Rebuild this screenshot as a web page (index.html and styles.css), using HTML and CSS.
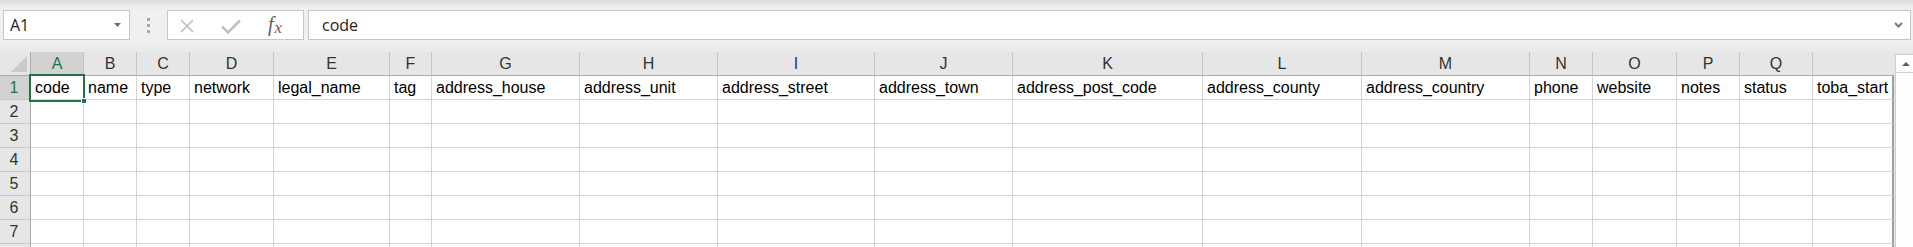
FILE: index.html
```html
<!DOCTYPE html>
<html lang="en">
<head>
<meta charset="utf-8">
<title>Sheet</title>
<link rel="stylesheet" href="styles.css">
</head>
<body>
<div class="app">
  <div class="fbar">
    <div class="namebox">
      <span class="nb-text">A1</span>
      <svg class="nb-arrow" width="7" height="4" viewBox="0 0 7 4"><path d="M0 0 H7 L3.5 4 Z" fill="#6d6d6d"/></svg>
    </div>
    <div class="grip"><i></i><i></i><i></i></div>
    <div class="fbuttons">
      <svg class="ic-x" width="14" height="14" viewBox="0 0 14 14"><path d="M1 1 L13 13 M13 1 L1 13" stroke="#bdbdbd" stroke-width="1.6" fill="none"/></svg>
      <svg class="ic-check" width="20" height="15" viewBox="0 0 20 15"><path d="M1 7.5 L7 13.5 L19 1.5" stroke="#c2c2c2" stroke-width="2.6" fill="none"/></svg>
      <span class="fx">f<span class="fx-x">x</span></span>
    </div>
    <div class="finput">
      <span class="fi-text">code</span>
      <svg class="fi-chev" width="9" height="6" viewBox="0 0 9 6"><path d="M1 1 L4.5 4.5 L8 1" stroke="#7a7a7a" stroke-width="2" fill="none"/></svg>
    </div>
  </div>
  <div class="sheet">
    <div class="grid">
      <div class="hd corner"><svg width="16" height="16" viewBox="0 0 16 16"><path d="M16 0 V16 H0 Z" fill="#cacaca"/></svg></div>
      <div class="hd col sel">A</div>
      <div class="hd col">B</div>
      <div class="hd col">C</div>
      <div class="hd col">D</div>
      <div class="hd col">E</div>
      <div class="hd col">F</div>
      <div class="hd col">G</div>
      <div class="hd col">H</div>
      <div class="hd col">I</div>
      <div class="hd col">J</div>
      <div class="hd col">K</div>
      <div class="hd col">L</div>
      <div class="hd col">M</div>
      <div class="hd col">N</div>
      <div class="hd col">O</div>
      <div class="hd col">P</div>
      <div class="hd col">Q</div>
      <div class="hd col last"></div>

      <div class="rh sel">1</div>
      <div class="c">code</div><div class="c">name</div><div class="c">type</div><div class="c">network</div><div class="c">legal_name</div><div class="c">tag</div><div class="c">address_house</div><div class="c">address_unit</div><div class="c">address_street</div><div class="c">address_town</div><div class="c">address_post_code</div><div class="c">address_county</div><div class="c">address_country</div><div class="c">phone</div><div class="c">website</div><div class="c">notes</div><div class="c">status</div><div class="c last">toba_start</div>

      <div class="rh">2</div>
      <div class="c"></div><div class="c"></div><div class="c"></div><div class="c"></div><div class="c"></div><div class="c"></div><div class="c"></div><div class="c"></div><div class="c"></div><div class="c"></div><div class="c"></div><div class="c"></div><div class="c"></div><div class="c"></div><div class="c"></div><div class="c"></div><div class="c"></div><div class="c last"></div>

      <div class="rh">3</div>
      <div class="c"></div><div class="c"></div><div class="c"></div><div class="c"></div><div class="c"></div><div class="c"></div><div class="c"></div><div class="c"></div><div class="c"></div><div class="c"></div><div class="c"></div><div class="c"></div><div class="c"></div><div class="c"></div><div class="c"></div><div class="c"></div><div class="c"></div><div class="c last"></div>

      <div class="rh">4</div>
      <div class="c"></div><div class="c"></div><div class="c"></div><div class="c"></div><div class="c"></div><div class="c"></div><div class="c"></div><div class="c"></div><div class="c"></div><div class="c"></div><div class="c"></div><div class="c"></div><div class="c"></div><div class="c"></div><div class="c"></div><div class="c"></div><div class="c"></div><div class="c last"></div>

      <div class="rh">5</div>
      <div class="c"></div><div class="c"></div><div class="c"></div><div class="c"></div><div class="c"></div><div class="c"></div><div class="c"></div><div class="c"></div><div class="c"></div><div class="c"></div><div class="c"></div><div class="c"></div><div class="c"></div><div class="c"></div><div class="c"></div><div class="c"></div><div class="c"></div><div class="c last"></div>

      <div class="rh">6</div>
      <div class="c"></div><div class="c"></div><div class="c"></div><div class="c"></div><div class="c"></div><div class="c"></div><div class="c"></div><div class="c"></div><div class="c"></div><div class="c"></div><div class="c"></div><div class="c"></div><div class="c"></div><div class="c"></div><div class="c"></div><div class="c"></div><div class="c"></div><div class="c last"></div>

      <div class="rh">7</div>
      <div class="c"></div><div class="c"></div><div class="c"></div><div class="c"></div><div class="c"></div><div class="c"></div><div class="c"></div><div class="c"></div><div class="c"></div><div class="c"></div><div class="c"></div><div class="c"></div><div class="c"></div><div class="c"></div><div class="c"></div><div class="c"></div><div class="c"></div><div class="c last"></div>

      <div class="rh"></div>
      <div class="c"></div><div class="c"></div><div class="c"></div><div class="c"></div><div class="c"></div><div class="c"></div><div class="c"></div><div class="c"></div><div class="c"></div><div class="c"></div><div class="c"></div><div class="c"></div><div class="c"></div><div class="c"></div><div class="c"></div><div class="c"></div><div class="c"></div><div class="c last"></div>

      <div class="selection"><i class="handle"></i></div>
    </div>
    <div class="vscroll">
      <div class="up"><svg width="8" height="4" viewBox="0 0 8 4"><path d="M0 4 H8 L4 0 Z" fill="#5e5e5e"/></svg></div>
    </div>
  </div>
</div>
</body>
</html>
```

FILE: styles.css
```css
* { box-sizing: border-box; }

html, body {
  margin: 0;
  padding: 0;
  background: #e6e6e6;
}

.app {
  width: 1913px;
  height: 247px;
  overflow: hidden;
  display: flex;
  flex-direction: column;
}

/* ---------- formula bar ---------- */
.fbar {
  height: 52px;
  flex: none;
  display: flex;
  align-items: flex-start;
  padding-top: 10px;
  background: linear-gradient(#dcdcdc 0, #ececec 6px, #f0f0f0 12px, #f0f0f0 39px, #e9e9e9 52px);
}

.namebox {
  margin-left: 3px;
  width: 127px;
  height: 30px;
  background: #fff;
  border: 1px solid #c6c6c6;
  display: flex;
  align-items: center;
  justify-content: space-between;
  padding: 0 8px 0 6px;
}

.nb-text, .fi-text {
  font-family: "Open Sans", "Liberation Sans", sans-serif;
  font-size: 16px;
  color: #222;
}

.grip {
  margin-left: 17px;
  margin-top: 8px;
  width: 3px;
  display: flex;
  flex-direction: column;
  gap: 3px;
}
.grip i {
  display: block;
  width: 3px;
  height: 3px;
  background: #a9a9a9;
}

.fbuttons {
  margin-left: 17px;
  width: 137px;
  height: 30px;
  background: #fff;
  border: 1px solid #c6c6c6;
  display: flex;
  align-items: center;
  padding-left: 12px;
}
.ic-x { margin-top: 1px; }
.ic-check { margin-left: 27px; margin-top: 2px; }
.fx {
  margin-left: 27px;
  font-family: "Liberation Serif", serif;
  font-style: italic;
  font-size: 20px;
  color: #5f5f5f;
  line-height: 1;
  margin-top: -2px;
}
.fx-x {
  font-size: 17px;
  position: relative;
  top: 2px;
  margin-left: 1px;
}

.finput {
  margin-left: 4px;
  flex: 1;
  margin-right: 2px;
  height: 30px;
  background: #fff;
  border: 1px solid #c6c6c6;
  display: flex;
  align-items: center;
  justify-content: space-between;
  padding: 0 7px 0 13px;
}

/* ---------- sheet ---------- */
.sheet {
  flex: 1;
  display: flex;
  background: #e6e6e6;
}

.grid {
  position: relative;
  width: 1893px;
  flex: none;
  display: grid;
  grid-template-columns: 31px 53px 53px 53px 84px 116px 42px 148px 138px 157px 138px 190px 159px 168px 63px 84px 63px 73px 81px;
  grid-auto-rows: 24px;
  align-content: start;
  font-family: "Liberation Sans", Arial, sans-serif;
  font-size: 16px;
}

.hd {
  background: #e6e6e6;
  border-bottom: 1px solid #ababab;
  line-height: 23px;
  color: #333;
  text-align: center;
}
.corner {
  border-right: 1px solid #ababab;
  display: flex;
  align-items: flex-end;
  justify-content: flex-end;
  padding: 0 3px 3px 0;
}
.corner svg { display: block; }
.col { border-right: 1px solid #c4c4c4; }
.col.sel {
  background: #d2d2d2;
  color: #217346;
}
.col.last { border-right: 0; }

.rh {
  background: #e6e6e6;
  border-right: 1px solid #ababab;
  border-bottom: 1px solid #c8c8c8;
  line-height: 23px;
  text-align: center;
  color: #333;
  padding-right: 2px;
}
.rh.sel {
  background: #d2d2d2;
  color: #217346;
}

.c {
  background: #fff;
  border-right: 1px solid #d4d4d4;
  border-bottom: 1px solid #d4d4d4;
  line-height: 23px;
  padding-left: 4px;
  white-space: nowrap;
  overflow: hidden;
  color: #000;
}
.c.last { border-right: 2px solid #9e9e9e; }

.selection {
  position: absolute;
  left: 29px;
  top: 22px;
  width: 56px;
  height: 28px;
  border: 2px solid #217346;
  pointer-events: none;
}
.handle {
  position: absolute;
  right: -4px;
  bottom: -4px;
  width: 6px;
  height: 6px;
  background: #217346;
  border: 1px solid #fff;
}

.vscroll {
  margin-left: 2px;
  margin-top: 2px;
  flex: 1;
  background: #fdfdfd;
  border-left: 1px solid #cfcfcf;
  border-top: 1px solid #cfcfcf;
}
.up {
  height: 18px;
  border-bottom: 1px solid #cfcfcf;
  display: flex;
  align-items: center;
  justify-content: center;
  padding-left: 3px;
}
.up svg { display: block; }
```
